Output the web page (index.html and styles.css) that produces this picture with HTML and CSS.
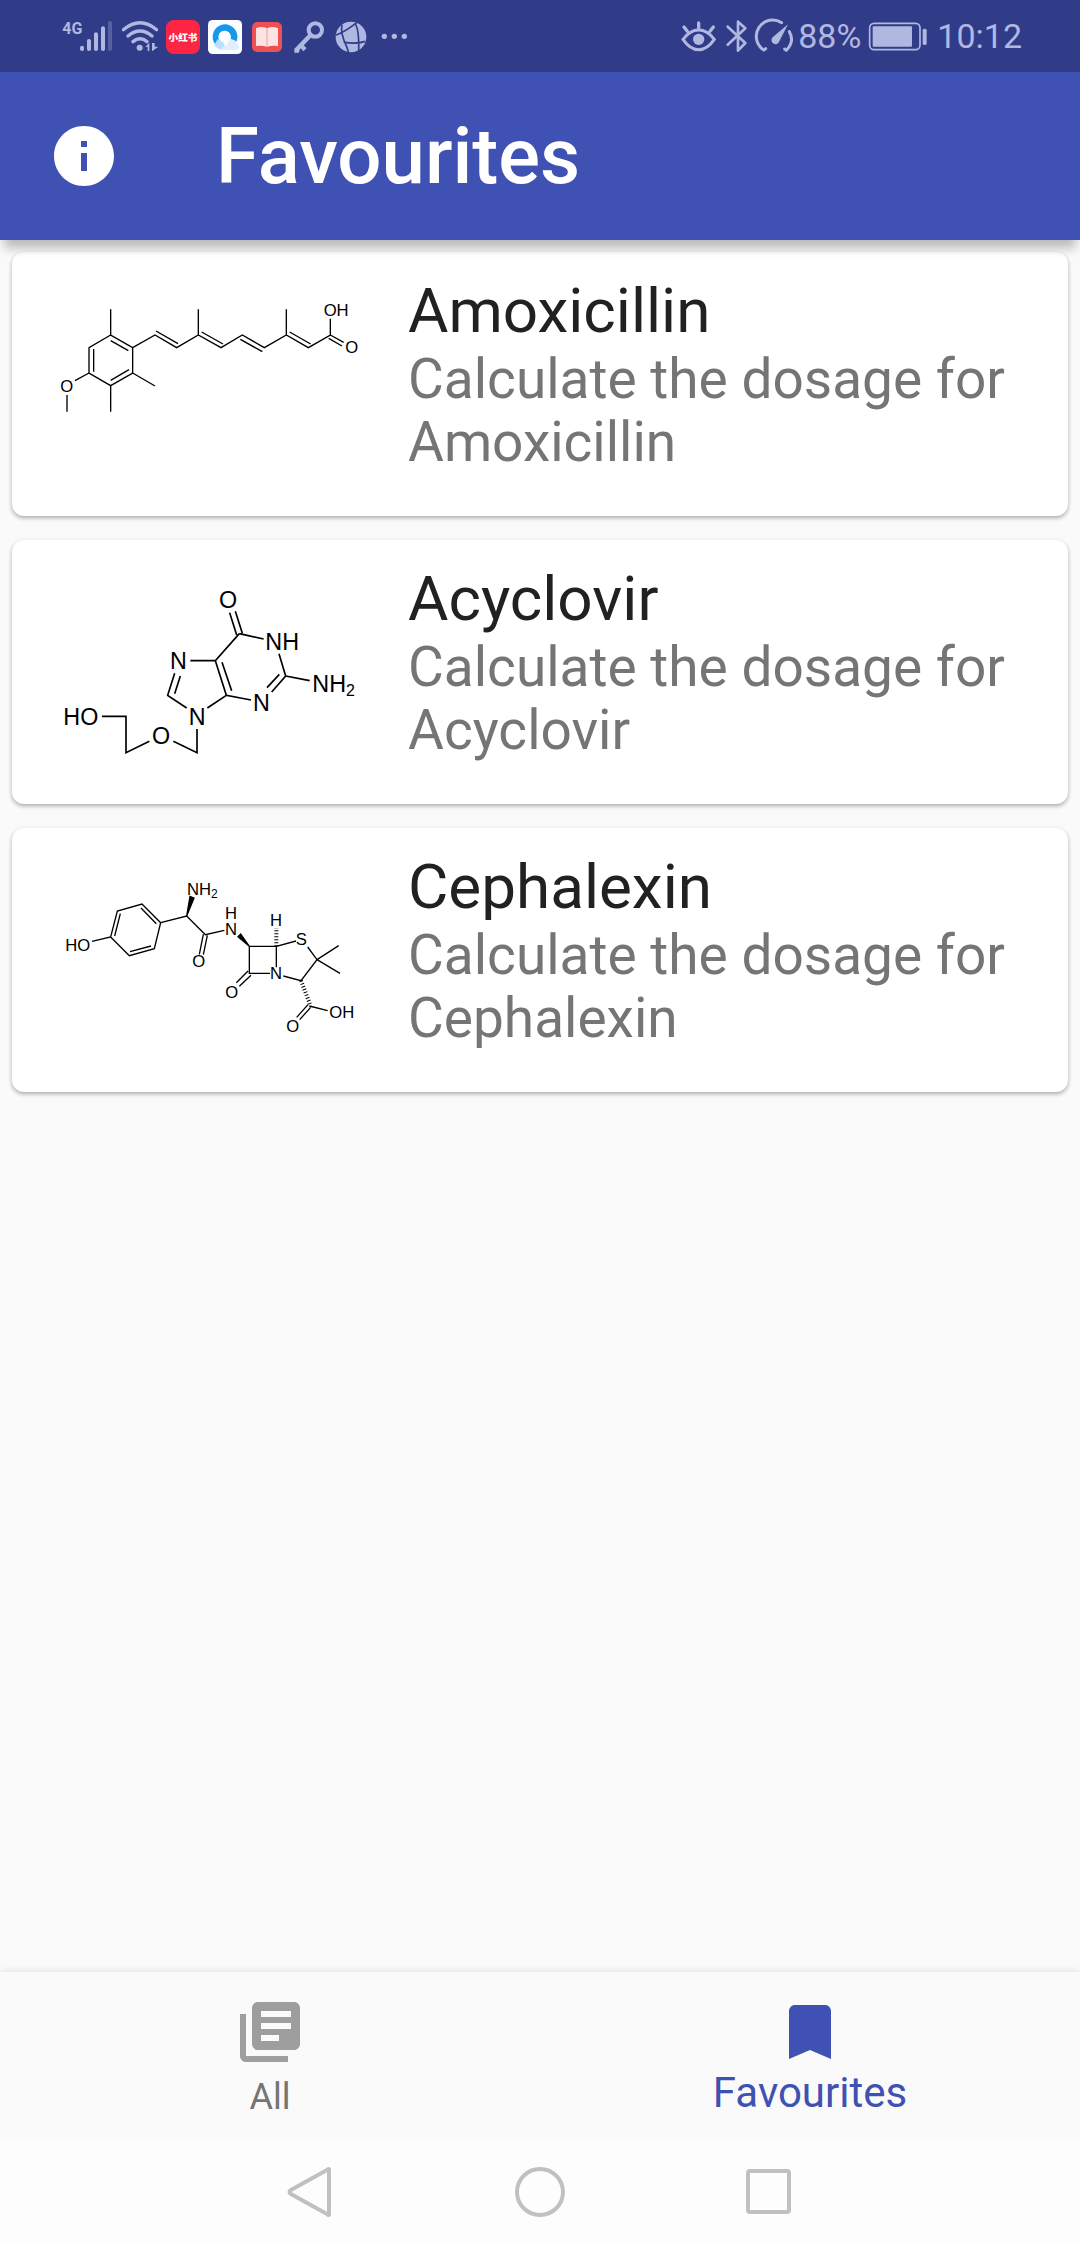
FILE: index.html
```html
<!DOCTYPE html>
<html lang="en">
<head>
<meta charset="utf-8">
<meta name="viewport" content="width=device-width, initial-scale=1">
<title>Favourites</title>
<link rel="stylesheet" href="styles.css">
</head>
<body>
<div class="status-bar">
  <div class="status-left">
    <svg class="icon-signal" viewBox="66 54 156 108" aria-label="4G signal">
      <text class="network" x="67" y="103">4G</text>
      <g class="line-round" stroke-width="12"><path d="M126 143v4M147 123v24M168 103v44M189 85v62"/><path opacity=".3" d="M210 69v78"/></g>
    </svg>
    <svg class="icon-wifi" viewBox="246 54 108 108" aria-label="Wi-Fi">
      <g class="line-round" stroke-width="10"><path d="M250 89Q300 47 350 89M264 108Q300 78 336 108M279 125Q300 108 321 125"/></g>
      <circle class="fill" cx="299" cy="143" r="9"/>
      <path class="fill" d="M316 141l12-13v25h-5v-12zM336 129v25l19-14h-11v-11z"/>
    </svg>
    <svg class="icon-app" viewBox="378 54 102 108" aria-label="Notification">
      <rect x="378" y="60" width="102" height="102" rx="24" fill="#fe2543"/>
      <text class="app-name" x="429" y="122">小红书</text>
    </svg>
    <svg class="icon-app" viewBox="504 54 102 108" aria-label="Browser">
      <rect x="504" y="60" width="102" height="102" rx="14" fill="#fbfdff"/>
      <path d="M540 144a37 37 0 1 1 49-19l-17-8a19 19 0 1 0-24 12z" fill="#1697e8"/>
      <path d="M523 135q10 17 36 14l-8-21-18-11z" fill="#b5e2fa"/>
      <path d="M543 150q4-12 18-14 4-21 19-17 10 3 11 13 12 8 2 18z" fill="#e2effa"/>
    </svg>
    <svg class="icon-app" viewBox="630 54 102 108" aria-label="Reader">
      <rect x="636" y="66" width="90" height="90" rx="16" fill="#ed5154"/>
      <path d="M648 85q17-8 33 0 16-8 33 0v53q-17-3-33 2-16-5-33-2z" fill="#fde3e2"/>
      <path d="M681 85v55" stroke="#e8a2a4" stroke-width="3"/>
    </svg>
    <svg class="icon-app" viewBox="756 54 102 108" aria-label="VPN key">
      <circle class="line" cx="826" cy="90" r="20" stroke-width="12"/>
      <path class="line" d="M812 105l-44 46M783 136l12 13" stroke-width="13"/>
      <path class="fill" d="M763 146v12h14l2-14z"/>
    </svg>
    <svg class="icon-app" viewBox="882 54 102 108" aria-label="Network">
      <circle class="fill" cx="933" cy="111" r="46"/>
      <path class="cut" d="M888 105q25-8 58-34l12-9M906 74q-6 25 14 66l6 18M911 126q34 8 65-2M945 70q13 20 11 83"/>
    </svg>
    <svg class="icon-app" viewBox="1008 54 102 108" aria-label="More notifications">
      <g class="fill"><circle cx="1033" cy="109" r="8"/><circle cx="1063" cy="109" r="8"/><circle cx="1093" cy="109" r="8"/></g>
    </svg>
  </div>
  <div class="status-right">
    <svg class="icon-eye" viewBox="60 54 120 108" aria-label="Eye comfort">
      <path class="line" d="M75 118Q96 90 122 90T169 118Q148 149 122 149T75 118Z" stroke-width="9"/>
      <circle class="fill" cx="122" cy="118" r="17"/>
      <path class="line-round" d="M122 69v16M78 81l10 13M166 81l-10 13" stroke-width="10"/>
    </svg>
    <svg class="icon-bluetooth" viewBox="192 54 84 108" aria-label="Bluetooth">
      <path class="line-round" d="M209 80l53 49-22 23V65l22 20-53 49" stroke-width="8"/>
    </svg>
    <svg class="icon-gauge" viewBox="288 54 120 108" aria-label="Performance">
      <path class="line-round" d="M371 68A45 45 0 0 0 317 150l6-4M394 95Q411 124 385 151l-5-4" stroke-width="9"/>
      <path class="fill" d="M390 73l-26 51a12 12 0 1 1-20-12z"/>
    </svg>
    <span>88%</span>
    <svg class="icon-battery" viewBox="621 54 204 108" aria-label="Battery">
      <rect class="line" x="635" y="70" width="151" height="79" rx="13" stroke-width="5"/>
      <rect class="fill" x="644" y="79" width="118" height="61" rx="3"/>
      <rect class="fill" x="794" y="86" width="12" height="49" rx="5"/>
    </svg>
    <time>10:12</time>
  </div>
</div>

<header class="app-bar">
  <button class="info-button" type="button" aria-label="About">
    <svg viewBox="0 0 24 24"><path d="M12 2C6.480 2 2 6.480 2 12s4.480 10 10 10 10-4.480 10-10S17.520 2 12 2zm1 15h-2v-6h2v6zm0-8h-2V7h2v2z"/></svg>
  </button>
  <h1>Favourites</h1>
</header>

<main class="drug-list">
  <article class="card">
    <svg class="structure structure-fine" viewBox="0 -12 1020 648" role="img" aria-label="Structure of Amoxicillin">
      <path d="M212 88V165L278 203V279L212 317L147 279V203L212 165M212 182L265 212M161 207V275M212 301L267 269M278 279L345 318M212 317V395M147 279L105 302M81 345V395M278 203L345 165L410 203L475 165L543 203L607 165L673 203L739 165L805 203L871 165V116M348 153L414 191M475 88V165M485 156L549 192M601 178L667 215M739 88V165M749 156L812 192M871 165L911 187M866 175L906 198"/>
      <text x="61" y="335">O</text><text x="851" y="107">OH</text><text x="916" y="220">O</text>
    </svg>
    <div class="card-text"><h2>Amoxicillin</h2><p>Calculate the dosage for Amoxicillin</p></div>
  </article>

  <article class="card">
    <svg class="structure structure-large" viewBox="0 -18 1020 648" role="img" aria-label="Structure of Acyclovir">
      <path d="M569 128L590 195M586 124L607 190M598 191L671 207M598 191L526 272L559 376L633 390M546 277L575 362M526 272H451M404 310L383 376L440 414M421 318L404 371M559 376L502 414M717 251L737 318L695 366M718 313L681 353M737 318L809 332M471 477V548L400 514M328 514L258 548V439H186"/>
      <text x="537" y="113">O</text><text x="676" y="239">NH</text><text x="390" y="296">N</text><text x="639" y="422">N</text><text x="817" y="366">NH<tspan class="sub" dy="12">2</tspan></text><text x="446" y="464">N</text><text x="70" y="464">HO</text><text x="336" y="521">O</text>
    </svg>
    <div class="card-text"><h2>Acyclovir</h2><p>Calculate the dosage for Acyclovir</p></div>
  </article>

  <article class="card">
    <svg class="structure structure-fine" viewBox="0 -24 1020 648" role="img" aria-label="Structure of Cephalexin">
      <path d="M156 244L212 231L232 153L306 132L362 188L343 266L268 287L212 231M224 228L241 161M303 144L349 191M333 258L270 275M362 188L440 168L496 224L553 211M490 223L478 283M502 226L490 284M628 259H709V322M628 259V340H690M624 333L589 368M633 346L598 379M709 259L768 243M803 261L831 299L783 362L730 348M831 299L896 257M831 299L900 340M808 438L863 452M804 434L770 472M812 442L779 479"/>
      <path class="solid" d="M440 168L450 109L462 114ZM628 259L594 230L602 222Z"/>
      <path class="hash" d="M709 259V204M783 362L812 438"/>
      <text x="441" y="105">NH<tspan class="sub" dy="10">2</tspan></text><text x="76" y="272">HO</text><text x="457" y="322">O</text><text x="555" y="177">H</text><text x="555" y="226">N</text><text x="690" y="199">H</text><text x="767" y="256">S</text><text x="690" y="357">N</text><text x="556" y="415">O</text><text x="868" y="475">OH</text><text x="739" y="516">O</text>
    </svg>
    <div class="card-text"><h2>Cephalexin</h2><p>Calculate the dosage for Cephalexin</p></div>
  </article>
</main>

<nav class="tabs" aria-label="Sections">
  <a class="tab" href="#all">
    <svg viewBox="0 0 24 24"><path d="M4 6H2v14c0 1.100.9 2 2 2h14v-2H4V6zm16-4H8c-1.100 0-2 .9-2 2v12c0 1.100.9 2 2 2h12c1.100 0 2-.9 2-2V4c0-1.100-.9-2-2-2zm-1 9H9V9h10v2zm-4 4H9v-2h6v2zm4-8H9V5h10v2z"/></svg>
    <span>All</span>
  </a>
  <a class="tab tab-active" href="#favourites" aria-current="page">
    <svg viewBox="0 0 24 24"><path d="M17 3H7c-1.100 0-2 .9-2 2v16l7-3 7 3V5c0-1.100-.9-2-2-2z"/></svg>
    <span>Favourites</span>
  </a>
</nav>

<div class="system-nav">
  <button type="button" aria-label="Back"><svg viewBox="0 0 54 54"><path d="M46 5V49Q46 51 44 49L8 29Q5 27 8 25L44 5Q46 3 46 5Z"/></svg></button>
  <button type="button" aria-label="Home"><svg viewBox="0 0 54 54"><circle cx="27" cy="27" r="23"/></svg></button>
  <button type="button" aria-label="Recent apps"><svg viewBox="0 0 54 54"><rect x="5" y="6" width="41" height="41" rx="2"/></svg></button>
</div>
</body>
</html>
```

FILE: styles.css
```css
* {
  box-sizing: border-box;
}

body {
  margin: 0;
  min-height: 100vh;
  display: flex;
  flex-direction: column;
  background: #fafafa;
  font-family: Roboto, "Noto Sans", sans-serif;
}

h1, h2, p {
  margin: 0;
  font-weight: 400;
}

svg {
  display: block;
}

button {
  padding: 0;
  border: 0;
  background: none;
}

/* Device status bar */
.status-bar {
  height: 72px;
  display: flex;
  justify-content: space-between;
  align-items: center;
  padding: 0 58px 0 62px;
  background: #303c87;
  color: #b0b8e2;
  font-size: 34px;
  line-height: 40px;
}

.status-left,
.status-right {
  display: flex;
  align-items: center;
}

.status-left { gap: 8px; }
.status-right { gap: 4px; }

.status-bar svg {
  height: 36px;
  flex: none;
}

.icon-signal { width: 52px; }
.icon-wifi { width: 36px; }
.icon-app { width: 34px; }
.icon-eye,
.icon-gauge { width: 40px; }
.icon-bluetooth { width: 28px; }
.icon-battery { width: 68px; }

.fill,
.network { fill: #b0b8e2; }

.line,
.line-round {
  fill: none;
  stroke: #b0b8e2;
}

.line-round {
  stroke-linecap: round;
  stroke-linejoin: round;
}

.cut {
  fill: none;
  stroke: #303c87;
  stroke-width: 5px;
}

.network {
  font: 700 48px "Liberation Sans Narrow", Roboto, sans-serif;
}

.app-name {
  fill: #fff;
  font: 900 29px "Noto Sans CJK SC", sans-serif;
  text-anchor: middle;
}

/* App bar */
.app-bar {
  position: relative;
  height: 168px;
  display: flex;
  align-items: center;
  gap: 96px;
  padding: 0 48px;
  background: #3f51b3;
  color: #fff;
  box-shadow: 0 12px 10px -4px rgba(0, 0, 0, 0.26);
}

.info-button svg {
  width: 72px;
  height: 72px;
  fill: #fff;
}

.app-bar h1 {
  padding-top: 2px;
  font-size: 78px;
  line-height: 92px;
  font-weight: 500;
}

/* Drug cards */
.drug-list {
  flex: 1;
  display: flex;
  flex-direction: column;
  gap: 24px;
  padding: 12px;
}

.card {
  display: flex;
  gap: 28px;
  padding: 24px 28px;
  border-radius: 12px;
  background: #fff;
  box-shadow: 0 2px 4px rgba(0, 0, 0, 0.32);
}

.structure {
  width: 340px;
  height: 216px;
  flex: none;
  fill: none;
  stroke: #000;
  stroke-width: 4px;
}

.structure text {
  fill: #000;
  stroke: none;
  font-family: "Liberation Sans", Arial, sans-serif;
}

.structure-fine { font-size: 50px; }
.structure-fine .sub { font-size: 36px; }
.structure-large { font-size: 70px; stroke-width: 5px; }
.structure-large .sub { font-size: 48px; }
.structure .solid { fill: #000; }

.structure .hash {
  stroke-width: 12px;
  stroke-dasharray: 3 6;
}

.card-text {
  flex: 1;
}

.card h2 {
  margin-bottom: 2px;
  color: #212121;
  font-size: 62px;
  line-height: 70px;
}

.card p {
  color: #757575;
  font-size: 55px;
  line-height: 63px;
}

/* Bottom tabs */
.tabs {
  height: 168px;
  display: flex;
  background: #fafafa;
  box-shadow: 0 -2px 6px rgba(0, 0, 0, 0.08);
}

.tab {
  flex: 1;
  display: flex;
  flex-direction: column;
  align-items: center;
  gap: 8px;
  padding-top: 24px;
  color: #757575;
  font-size: 36px;
  line-height: 42px;
  text-decoration: none;
}

.tab svg {
  width: 72px;
  height: 72px;
  fill: #9e9e9e;
}

.tab-active {
  gap: 0;
  color: #3f51b3;
  font-size: 42px;
  line-height: 50px;
}

.tab-active svg {
  fill: #3f51b3;
}

/* Device navigation */
.system-nav {
  height: 104px;
  display: flex;
  justify-content: center;
  align-items: center;
  gap: 176px;
  background: #fdfdfd;
}

.system-nav svg {
  width: 54px;
  height: 54px;
  fill: none;
  stroke: #c0c0c0;
  stroke-width: 4px;
}
```
